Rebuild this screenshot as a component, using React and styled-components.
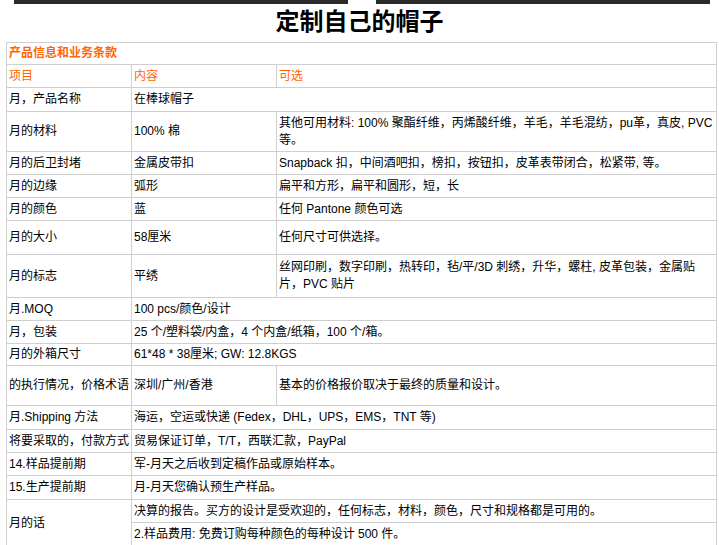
import React from "react";
import styled, { createGlobalStyle } from "styled-components";

const G = createGlobalStyle`
  body { margin: 0; font-family: "Liberation Sans", Arial, "Noto Sans CJK SC", sans-serif; font-size: 12px; color: #000; background: #fff; }
`;
const Bars = styled.div`display: flex; justify-content: space-between; padding: 0 9px 0 14px; height: 4px;`;
const Bar = styled.div`width: 334px; height: 4px; background: #2a2a2a;`;
const Title = styled.h1`margin: 3px 0 0; height: 35px; text-align: center; font-size: 24px; font-weight: bold; line-height: 30px;`;
const Table = styled.table`
  margin-left: 6px; width: 711px; border-collapse: collapse; table-layout: fixed;
  td { border: 1px solid #cfcfcf; padding: 0 2px; vertical-align: middle; line-height: 17px; }
`;
const Row = styled.tr`height: ${p => p.h}px;`;
const Head = styled.td`color: #ff6600; font-weight: ${p => p.b ? "bold" : "normal"};`;

const rows = [
  ["月，产品名称", "在棒球帽子", null, 24],
  ["月的材料", "100% 棉", "其他可用材料: 100% 聚酯纤维，丙烯酸纤维，羊毛，羊毛混纺，pu革，真皮, PVC等。", 40],
  ["月的后卫封堵", "金属皮带扣", "Snapback 扣，中间酒吧扣，榜扣，按钮扣，皮革表带闭合，松紧带, 等。", 23],
  ["月的边缘", "弧形", "扁平和方形，扁平和圆形，短，长", 23],
  ["月的颜色", "蓝", "任何 Pantone 颜色可选", 23],
  ["月的大小", "58厘米", "任何尺寸可供选择。", 34],
  ["月的标志", "平绣", "丝网印刷，数字印刷，热转印，毡/平/3D 刺绣，升华，螺柱, 皮革包装，金属贴片，PVC 贴片", 43],
  ["月.MOQ", "100 pcs/颜色/设计", null, 23],
  ["月，包装", "25 个/塑料袋/内盒，4 个内盒/纸箱，100 个/箱。", null, 23],
  ["月的外箱尺寸", "61*48 * 38厘米; GW: 12.8KGS", null, 22],
  ["的执行情况，价格术语", "深圳/广州/香港", "基本的价格报价取决于最终的质量和设计。", 40],
  ["月.Shipping 方法", "海运，空运或快递 (Fedex，DHL，UPS，EMS，TNT 等)", null, 24],
  ["将要采取的，付款方式", "贸易保证订单，T/T，西联汇款，PayPal", null, 23],
  ["14.样品提前期", "军-月天之后收到定稿作品或原始样本。", null, 23],
  ["15.生产提前期", "月-月天您确认预生产样品。", null, 24],
];

export default function App() {
  return (
    <>
      <G />
      <Bars><Bar /><Bar /></Bars>
      <Title>定制自己的帽子</Title>
      <Table>
        <colgroup><col style={{ width: 125 }} /><col style={{ width: 145 }} /><col /></colgroup>
        <tbody>
          <Row h={22}><Head b colSpan={3}>产品信息和业务条款</Head></Row>
          <Row h={23}><Head>项目</Head><Head>内容</Head><Head>可选</Head></Row>
          {rows.map(([a, b, c, h]) => (
            <Row h={h} key={a}>
              <td>{a}</td>
              {c === null ? <td colSpan={2}>{b}</td> : <><td>{b}</td><td>{c}</td></>}
            </Row>
          ))}
          <Row h={23}><td rowSpan={2}>月的话</td><td colSpan={2}>决算的报告。买方的设计是受欢迎的，任何标志，材料，颜色，尺寸和规格都是可用的。</td></Row>
          <Row h={24}><td colSpan={2}>2.样品费用: 免费订购每种颜色的每种设计 500 件。</td></Row>
        </tbody>
      </Table>
    </>
  );
}
